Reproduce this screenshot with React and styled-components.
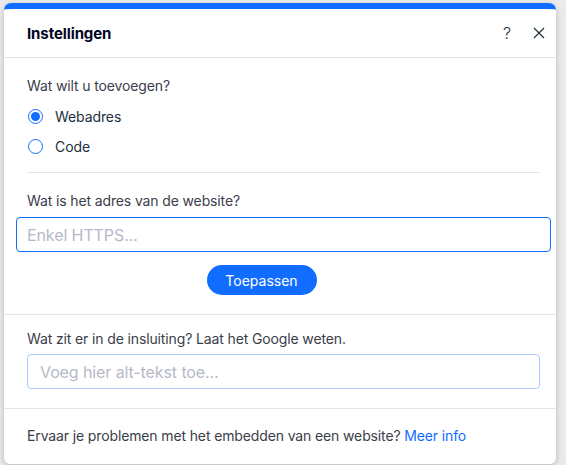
import styled, { createGlobalStyle } from "styled-components";

const GlobalStyle = createGlobalStyle`
  html, body {
    margin: 0;
    padding: 0;
    background: #ebebeb;
  }
  body {
    font-family: "Inter", "Noto Sans", sans-serif;
    -webkit-font-smoothing: antialiased;
  }
`;

const Page = styled.div`
  padding: 3px 10px 4px 4px;
  width: 566px;
  height: 465px;
  box-sizing: border-box;
`;

const Dialog = styled.div`
  width: 552px;
  background: #fff;
  border-top: 6px solid #116dff;
  border-radius: 7px 7px 6px 6px;
  box-shadow: 0 2px 6px rgba(0, 0, 0, 0.22);
  overflow: hidden;
`;

const Header = styled.div`
  display: flex;
  align-items: center;
  height: 48px;
  padding: 0 5px 0 23px;
  border-bottom: 1px solid #dfe5eb;
`;

const Title = styled.h1`
  flex: 1;
  margin: 0;
  font-size: 15px;
  font-weight: 700;
  letter-spacing: -0.1px;
  color: #000624;
`;

const IconButton = styled.button`
  display: flex;
  align-items: center;
  justify-content: center;
  width: 24px;
  height: 24px;
  margin-left: 8px;
  padding: 0;
  border: none;
  background: none;
  color: #20303c;
  font-family: "Inter", sans-serif;
  font-size: 16px;
  font-weight: 300;
  cursor: pointer;
`;

const Section = styled.div`
  padding: ${(p) => p.$pad || "19px 16px 19px 23px"};
  border-bottom: ${(p) => (p.$line ? "1px solid #dfe5eb" : "none")};
`;

const Label = styled.div`
  font-size: 14px;
  line-height: 18px;
  letter-spacing: -0.13px;
  color: #3b3d4a;
  margin-bottom: ${(p) => p.$gap || 6}px;
`;

const RadioRow = styled.label`
  display: flex;
  align-items: center;
  height: 30px;
  gap: 12px;
  font-size: 14px;
  letter-spacing: -0.1px;
  color: #20303c;
  cursor: pointer;
`;

const RadioCircle = styled.span`
  width: 15px;
  height: 15px;
  box-sizing: border-box;
  border-radius: 50%;
  border: 1px solid #116dff;
  display: flex;
  align-items: center;
  justify-content: center;
  margin-left: 1px;

  &::after {
    content: "";
    width: 9px;
    height: 9px;
    border-radius: 50%;
    background: ${(p) => (p.$checked ? "#116dff" : "transparent")};
  }
`;

const Divider = styled.hr`
  border: none;
  border-top: 1px solid #dfe5eb;
  margin: 11px 0 0 0;
`;

const Input = styled.input`
  display: block;
  box-sizing: border-box;
  width: ${(p) => (p.$wide ? "calc(100% + 22px)" : "100%")};
  margin: ${(p) => (p.$wide ? "0 -11px" : "0")};
  height: 35px;
  padding: 0 ${(p) => (p.$wide ? 10 : 12)}px;
  border: 1px solid ${(p) => (p.$focus ? "#116dff" : "#a8caff")};
  border-radius: 4px;
  font-family: "Inter", sans-serif;
  font-size: 16px;
  letter-spacing: -0.1px;
  color: #20303c;
  outline: none;

  &::placeholder {
    color: #b6b9c9;
  }
`;

const ButtonRow = styled.div`
  display: flex;
  justify-content: center;
  margin-top: 13px;
  padding-right: 44px;
`;

const PrimaryButton = styled.button`
  height: 30px;
  width: 110px;
  padding: 0;
  border: none;
  border-radius: 15px;
  background: #116dff;
  color: #fff;
  font-family: "Inter", sans-serif;
  font-size: 14px;
  cursor: pointer;
`;

const Footer = styled.div`
  padding: 18px 23px 19px;
  font-size: 14px;
  line-height: 18px;
  letter-spacing: -0.13px;
  color: #3b3d4a;
`;

const Link = styled.a`
  color: #116dff;
  text-decoration: none;
`;

const CloseIcon = () => (
  <svg width="12" height="12" viewBox="0 0 12 12">
    <path d="M1 1L11 11M11 1L1 11" stroke="#20303c" strokeWidth="1.2" />
  </svg>
);

export default function App() {
  return (
    <>
      <GlobalStyle />
      <Page>
        <Dialog>
          <Header>
            <Title>Instellingen</Title>
            <IconButton>?</IconButton>
            <IconButton>
              <CloseIcon />
            </IconButton>
          </Header>

          <Section $pad="19px 16px 0 23px">
            <Label>Wat wilt u toevoegen?</Label>
            <RadioRow>
              <RadioCircle $checked />
              Webadres
            </RadioRow>
            <RadioRow>
              <RadioCircle />
              Code
            </RadioRow>
            <Divider />
          </Section>

          <Section $line $pad="19px 16px 19px 23px">
            <Label $gap={7}>Wat is het adres van de website?</Label>
            <Input $wide $focus placeholder="Enkel HTTPS..." />
            <ButtonRow>
              <PrimaryButton>Toepassen</PrimaryButton>
            </ButtonRow>
          </Section>

          <Section $line $pad="15px 16px 19px 23px">
            <Label>Wat zit er in de insluiting? Laat het Google weten.</Label>
            <Input placeholder="Voeg hier alt-tekst toe..." />
          </Section>

          <Footer>
            Ervaar je problemen met het embedden van een website?{" "}
            <Link href="#">Meer info</Link>
          </Footer>
        </Dialog>
      </Page>
    </>
  );
}
